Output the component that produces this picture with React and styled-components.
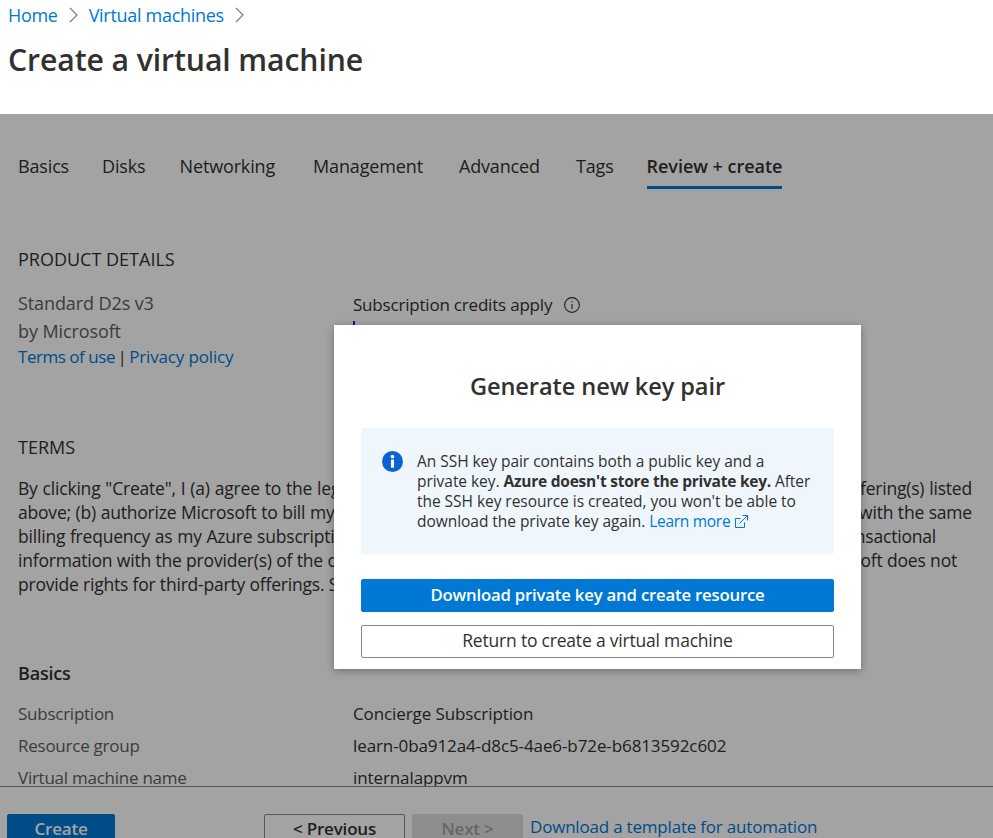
import React from "react"
import styled, { createGlobalStyle } from "styled-components"

const GlobalStyle = createGlobalStyle`
  html, body {
    margin: 0;
    padding: 0;
    background: #fff;
  }
  body {
    font-family: "Open Sans", "Noto Sans", "Liberation Sans", sans-serif;
    color: #323130;
  }
`

const Page = styled.div`
  position: relative;
  display: flex;
  flex-direction: column;
  width: 993px;
  height: 838px;
  overflow: hidden;
`

const Header = styled.header`
  flex: none;
  height: 114px;
  padding: 3px 8px 0;
  box-sizing: border-box;
`

const Breadcrumb = styled.nav`
  display: flex;
  align-items: center;
  height: 24px;
  gap: 11px;
  font-size: 18px;
  letter-spacing: -0.3px;
  a {
    color: #0078d4;
  }
  svg {
    color: #777;
  }
`

const Title = styled.h1`
  margin: 13px 0 0;
  font-size: 30.2px;
  line-height: 40px;
  font-weight: 600;
  letter-spacing: -0.1px;
`

const Main = styled.main`
  flex: 1;
  min-height: 0;
  overflow: hidden;
  padding: 0 18px;
`

const Tabs = styled.div`
  display: flex;
  margin-top: 38px;
  height: 37px;
`

const Tab = styled.div`
  margin-left: ${({ $gap }) => $gap}px;
  font-size: 18px;
  line-height: 28px;
  letter-spacing: ${({ $active }) => ($active ? "-0.03px" : "-0.15px")};
  font-weight: ${({ $active }) => ($active ? 600 : 400)};
  color: #323130;
  height: 37px;
  box-sizing: border-box;
  border-bottom: ${({ $active }) => ($active ? "3px solid #0078d4" : "none")};
`

const SectionLabel = styled.div`
  font-size: 18px;
  line-height: 24px;
  margin-top: ${({ $top }) => $top}px;
  color: #323130;
`

const ProductGrid = styled.div`
  display: grid;
  grid-template-columns: 335px 1fr;
  margin-top: 18px;
`

const Muted = styled.div`
  font-size: 18px;
  line-height: 28px;
  letter-spacing: -0.1px;
  color: #605e5c;
`

const Links = styled.div`
  font-size: 17px;
  line-height: 24px;
  word-spacing: -2px;
  color: #323130;
  a {
    color: #0078d4;
    word-spacing: 0;
    letter-spacing: -0.15px;
  }
  a:first-child {
    letter-spacing: -0.46px;
  }
`

const Credits = styled.div`
  display: flex;
  align-items: center;
  gap: 11px;
  padding-top: 4px;
  font-size: 17px;
  line-height: 24px;
  letter-spacing: -0.2px;
  svg {
    color: #323130;
  }
`

const CreditsLink = styled.div`
  width: 2px;
  height: 4px;
  margin-top: 4px;
  background: #0033cc;
`

const TermsText = styled.div`
  margin-top: 17px;
  font-size: 17.5px;
  line-height: 24px;
  letter-spacing: -0.2px;
  white-space: nowrap;
  color: #323130;
`

const TermsLine = styled.div`
  width: ${({ $width }) => ($width ? `${$width}px` : "auto")};
  text-align-last: ${({ $width }) => ($width ? "justify" : "auto")};
`

const BasicsTitle = styled.h2`
  margin: 65px 0 0;
  font-size: 18px;
  line-height: 24px;
  font-weight: 600;
  letter-spacing: -0.2px;
`

const SummaryGrid = styled.dl`
  display: grid;
  grid-template-columns: 335px 1fr;
  grid-auto-rows: 32px;
  margin: 17px 0 0;
  font-size: 17px;
  line-height: 24px;
  dt {
    color: #605e5c;
    letter-spacing: -0.25px;
  }
  dd {
    margin: 0;
    color: #323130;
    letter-spacing: -0.1px;
  }
`

const Footer = styled.footer`
  flex: none;
  display: flex;
  align-items: flex-start;
  height: 52px;
  box-sizing: border-box;
  padding: 27px 0 0 7px;
  border-top: 1px solid #8a8886;
`

const FooterButton = styled.div`
  box-sizing: border-box;
  display: flex;
  justify-content: center;
  height: 32px;
  width: ${({ $width }) => $width}px;
  margin-left: ${({ $gap }) => $gap || 0}px;
  border-radius: 2px;
  font-size: 17px;
  line-height: 28px;
  font-weight: 600;
  letter-spacing: -0.2px;
  border: 1px solid
    ${({ $kind }) =>
      $kind === "primary" ? "#0078d4" : $kind === "disabled" ? "#e1dfdd" : "#8a8886"};
  background: ${({ $kind }) =>
    $kind === "primary" ? "#0078d4" : $kind === "disabled" ? "#e1dfdd" : "#fff"};
  color: ${({ $kind }) =>
    $kind === "primary" ? "#fff" : $kind === "disabled" ? "#a19f9d" : "#323130"};
`

const TemplateLink = styled.a`
  margin-left: 7px;
  font-size: 17px;
  line-height: 26px;
  letter-spacing: -0.2px;
  color: #0078d4;
`

const Backdrop = styled.div`
  position: absolute;
  top: 114px;
  left: 0;
  right: 0;
  bottom: 0;
  background: rgba(0, 0, 0, 0.36);
`

const Modal = styled.div`
  position: absolute;
  top: 325px;
  left: 334px;
  width: 527px;
  height: 344px;
  box-sizing: border-box;
  padding: 41px 27px 0;
  background: #fff;
  box-shadow: 0 2px 8px rgba(0, 0, 0, 0.3);
`

const ModalTitle = styled.h2`
  margin: 0;
  text-align: center;
  font-size: 23.6px;
  line-height: 40px;
  font-weight: 600;
  letter-spacing: -0.1px;
  color: #323130;
`

const Notice = styled.div`
  display: flex;
  gap: 14px;
  margin-top: 22px;
  height: 126px;
  box-sizing: border-box;
  padding: 23px 21px 0;
  border-radius: 2px;
  background: #eff6fc;
`

const NoticeIcon = styled.svg`
  flex: none;
  width: 21px;
  height: 21px;
`

const NoticeText = styled.div`
  font-size: 15.5px;
  line-height: 20px;
  letter-spacing: -0.04px;
  white-space: nowrap;
  color: #323130;
  a {
    color: #0078d4;
    letter-spacing: -0.3px;
  }
  b {
    font-weight: 700;
    letter-spacing: -0.24px;
  }
  svg {
    margin-left: 5px;
    vertical-align: -1px;
  }
`

const ModalButton = styled.div`
  box-sizing: border-box;
  height: 33px;
  margin-top: ${({ $top }) => $top}px;
  border-radius: 2px;
  text-align: center;
  font-size: ${({ $primary }) => ($primary ? 16.75 : 17.5)}px;
  line-height: 29px;
  letter-spacing: -0.2px;
  font-weight: ${({ $primary }) => ($primary ? 600 : 400)};
  border: 1px solid ${({ $primary }) => ($primary ? "#0078d4" : "#8a8886")};
  background: ${({ $primary }) => ($primary ? "#0078d4" : "#fff")};
  color: ${({ $primary }) => ($primary ? "#fff" : "#323130")};
`

const Chevron = () => (
  <svg width="9" height="16" viewBox="0 0 9 16" fill="none" stroke="currentColor" strokeWidth="1.1">
    <path d="M1 1 8 8 1 15" />
  </svg>
)

const InfoOutline = () => (
  <svg width="18" height="18" viewBox="0 0 18 18" fill="none" stroke="currentColor" strokeWidth="1.1">
    <circle cx="9" cy="9" r="7.4" />
    <path d="M9 8v5" />
    <circle cx="9" cy="5.6" r="0.7" fill="currentColor" stroke="none" />
  </svg>
)

const ExternalLink = () => (
  <svg width="13" height="13" viewBox="0 0 13 13" fill="none" stroke="#0078d4" strokeWidth="1">
    <path d="M9.5 7.5v5h-9v-9h5" />
    <path d="M4.5 8.5 12 1M7.5.5h5v5" />
  </svg>
)

const tabs = [
  ["Basics", 0],
  ["Disks", 33],
  ["Networking", 34],
  ["Management", 38],
  ["Advanced", 36],
  ["Tags", 36],
]

const summary = [
  ["Subscription", "Concierge Subscription"],
  ["Resource group", "learn-0ba912a4-d8c5-4ae6-b72e-b6813592c602"],
  ["Virtual machine name", "internalappvm"],
]

const terms = [
  ['By clicking "Create", I (a) agree to the legal terms and privacy statement(s) associated with Marketplace offering(s) listed', 954],
  ["above; (b) authorize Microsoft to bill my current payment method for the fees associated with offering(s), with the same", 954],
  ["billing frequency as my Azure subscription; and (c) agree that Microsoft may share contact, usage and transactional", 918],
  ["information with the provider(s) of the offering(s) for support, billing and all other related activities. Microsoft does not", 939],
  ["provide rights for third-party offerings. See the Azure Marketplace Terms for additional details.", 0],
]

const App = () => (
  <Page>
    <GlobalStyle />
    <Header>
      <Breadcrumb>
        <a>Home</a>
        <Chevron />
        <a>Virtual machines</a>
        <Chevron />
      </Breadcrumb>
      <Title>Create a virtual machine</Title>
    </Header>

    <Main>
      <Tabs>
        {tabs.map(([label, gap]) => (
          <Tab key={label} $gap={gap}>{label}</Tab>
        ))}
        <Tab $active $gap={33}>Review + create</Tab>
      </Tabs>

      <SectionLabel $top={58}>PRODUCT DETAILS</SectionLabel>
      <ProductGrid>
        <div>
          <Muted>Standard D2s v3</Muted>
          <Muted>by Microsoft</Muted>
          <Links>
            <a>Terms of use</a> | <a>Privacy policy</a>
          </Links>
        </div>
        <div>
          <Credits>
            Subscription credits apply <InfoOutline />
          </Credits>
          <CreditsLink />
        </div>
      </ProductGrid>

      <SectionLabel $top={66}>TERMS</SectionLabel>
      <TermsText>
        {terms.map(([line, width]) => (
          <TermsLine key={line} $width={width}>{line}</TermsLine>
        ))}
      </TermsText>

      <BasicsTitle>Basics</BasicsTitle>
      <SummaryGrid>
        {summary.map(([k, v]) => (
          <React.Fragment key={k}>
            <dt>{k}</dt>
            <dd>{v}</dd>
          </React.Fragment>
        ))}
      </SummaryGrid>
    </Main>

    <Footer>
      <FooterButton $kind="primary" $width={108}>Create</FooterButton>
      <FooterButton $width={141} $gap={149}>&lt; Previous</FooterButton>
      <FooterButton $kind="disabled" $width={111} $gap={7}>Next &gt;</FooterButton>
      <TemplateLink>Download a template for automation</TemplateLink>
    </Footer>

    <Backdrop />

    <Modal>
      <ModalTitle>Generate new key pair</ModalTitle>
      <Notice>
        <NoticeIcon viewBox="0 0 22 22">
          <circle cx="11" cy="11" r="11" fill="#0b62d6" />
          <rect x="9.4" y="9" width="3.2" height="8.5" fill="#fff" />
          <circle cx="11" cy="5.9" r="1.9" fill="#fff" />
        </NoticeIcon>
        <NoticeText>
          An SSH key pair contains both a public key and a
          <br />
          private key. <b>Azure doesn't store the private key.</b> After
          <br />
          the SSH key resource is created, you won't be able to
          <br />
          download the private key again. <a>Learn more</a>
          <ExternalLink />
        </NoticeText>
      </Notice>
      <ModalButton $primary $top={25}>Download private key and create resource</ModalButton>
      <ModalButton $top={13}>Return to create a virtual machine</ModalButton>
    </Modal>
  </Page>
)

export default App
